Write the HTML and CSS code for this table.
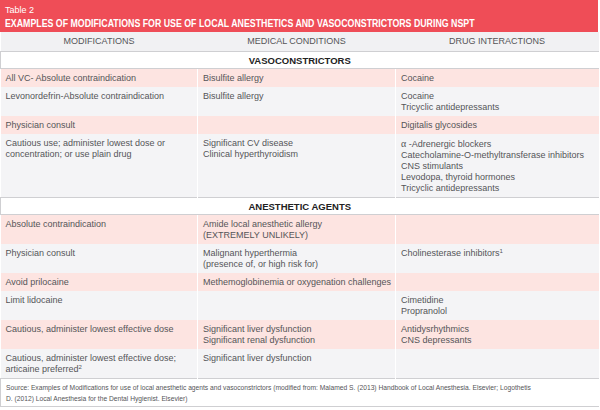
FILE: index.html
```html
<!DOCTYPE html>
<html>
<head>
<meta charset="utf-8">
<link rel="stylesheet" href="styles.css">
</head>
<body>
<div class="wrap">
  <div class="banner">
    <div class="label">Table 2</div>
    <div class="title">EXAMPLES OF MODIFICATIONS FOR USE OF LOCAL ANESTHETICS AND VASOCONSTRICTORS DURING NSPT</div>
  </div>
  <table class="grid">
    <colgroup>
      <col class="c1"><col class="c2"><col class="c3">
    </colgroup>
    <thead>
      <tr class="head">
        <th>MODIFICATIONS</th>
        <th>MEDICAL CONDITIONS</th>
        <th>DRUG INTERACTIONS</th>
      </tr>
    </thead>
    <tbody>
      <tr class="section"><td colspan="3">VASOCONSTRICTORS</td></tr>
      <tr class="pink">
        <td>All VC- Absolute contraindication</td>
        <td>Bisulfite allergy</td>
        <td>Cocaine</td>
      </tr>
      <tr class="gray">
        <td>Levonordefrin-Absolute contraindication</td>
        <td>Bisulfite allergy</td>
        <td>Cocaine<br>Tricyclic antidepressants</td>
      </tr>
      <tr class="pink">
        <td>Physician consult</td>
        <td></td>
        <td>Digitalis glycosides</td>
      </tr>
      <tr class="gray">
        <td>Cautious use; administer lowest dose or concentration; or use plain drug</td>
        <td>Significant CV disease<br>Clinical hyperthyroidism</td>
        <td><span class="alpha">α</span> -Adrenergic blockers<br>Catecholamine-O-methyltransferase inhibitors<br>CNS stimulants<br>Levodopa, thyroid hormones<br>Tricyclic antidepressants</td>
      </tr>
      <tr class="section"><td colspan="3">ANESTHETIC AGENTS</td></tr>
      <tr class="pink">
        <td>Absolute contraindication</td>
        <td>Amide local anesthetic allergy<br>(EXTREMELY UNLIKELY)</td>
        <td></td>
      </tr>
      <tr class="gray">
        <td>Physician consult</td>
        <td>Malignant hyperthermia<br>(presence of, or high risk for)</td>
        <td>Cholinesterase inhibitors<sup>1</sup></td>
      </tr>
      <tr class="pink">
        <td>Avoid prilocaine</td>
        <td class="nowrap">Methemoglobinemia or oxygenation challenges</td>
        <td></td>
      </tr>
      <tr class="gray">
        <td>Limit lidocaine</td>
        <td></td>
        <td>Cimetidine<br>Propranolol</td>
      </tr>
      <tr class="pink">
        <td>Cautious, administer lowest effective dose</td>
        <td>Significant liver dysfunction<br>Significant renal dysfunction</td>
        <td>Antidysrhythmics<br>CNS depressants</td>
      </tr>
      <tr class="gray">
        <td>Cautious, administer lowest effective dose; articaine preferred<sup>2</sup></td>
        <td>Significant liver dysfunction</td>
        <td></td>
      </tr>
      <tr class="source"><td colspan="3">Source: Examples of Modifications for use of local anesthetic agents and vasoconstrictors (modified from: Malamed S. (2013) Handbook of Local Anesthesia. Elsevier; Logothetis<br>D. (2012) Local Anesthesia for the Dental Hygienist. Elsevier)</td></tr>
    </tbody>
  </table>
</div>
</body>
</html>
```
FILE: styles.css
```css
html, body {
  margin: 0;
  padding: 0;
  background: #ffffff;
}
body {
  font-family: "Liberation Sans", Arial, sans-serif;
  color: #555558;
}
.wrap {
  width: 598px;
}
.banner {
  background: #ef4d57;
  color: #ffffff;
  height: 32px;
  box-sizing: border-box;
  padding: 5px 5px 0;
}
.label {
  font-size: 9px;
  line-height: 11px;
}
.title {
  font-family: "Liberation Sans", Arial, sans-serif;
  font-weight: bold;
  font-size: 11px;
  line-height: 14px;
  white-space: nowrap;
  transform: scaleX(0.8);
  transform-origin: left center;
}
.grid {
  width: 598px;
  table-layout: fixed;
  border-collapse: collapse;
  font-size: 9px;
}
.c1 { width: 197px; }
.c2 { width: 198px; }
.c3 { width: 203px; }
.head th {
  background: #f1f1f3;
  font-weight: normal;
  height: 19px;
  padding: 0;
  line-height: 19px;
  text-align: center;
  color: #555558;
}
.grid td {
  padding: 4px 2px 3px 5px;
  line-height: 11px;
  vertical-align: top;
  border-right: 1px solid #ffffff;
}
.grid td:last-child {
  border-right: none;
}
.grid td.nowrap {
  white-space: nowrap;
}
.pink td { background: #fde4e1; }
.gray td { background: #f4f4f6; }
.section td {
  background: #ffffff;
  border: 1px solid #cfcfd2;
  text-align: center;
  font-weight: bold;
  font-size: 9.5px;
  line-height: 11px;
  color: #222222;
  padding: 3px 5px 2px;
}
.source td {
  background: #ffffff;
  border: 1px solid #cfcfd2;
  font-size: 6.7px;
  line-height: 11px;
  padding: 3px 5px 2px;
}
.alpha {
  font-family: "Liberation Serif", serif;
  font-size: 10px;
}
sup {
  font-size: 6px;
  line-height: 0;
  vertical-align: 3px;
}
```
